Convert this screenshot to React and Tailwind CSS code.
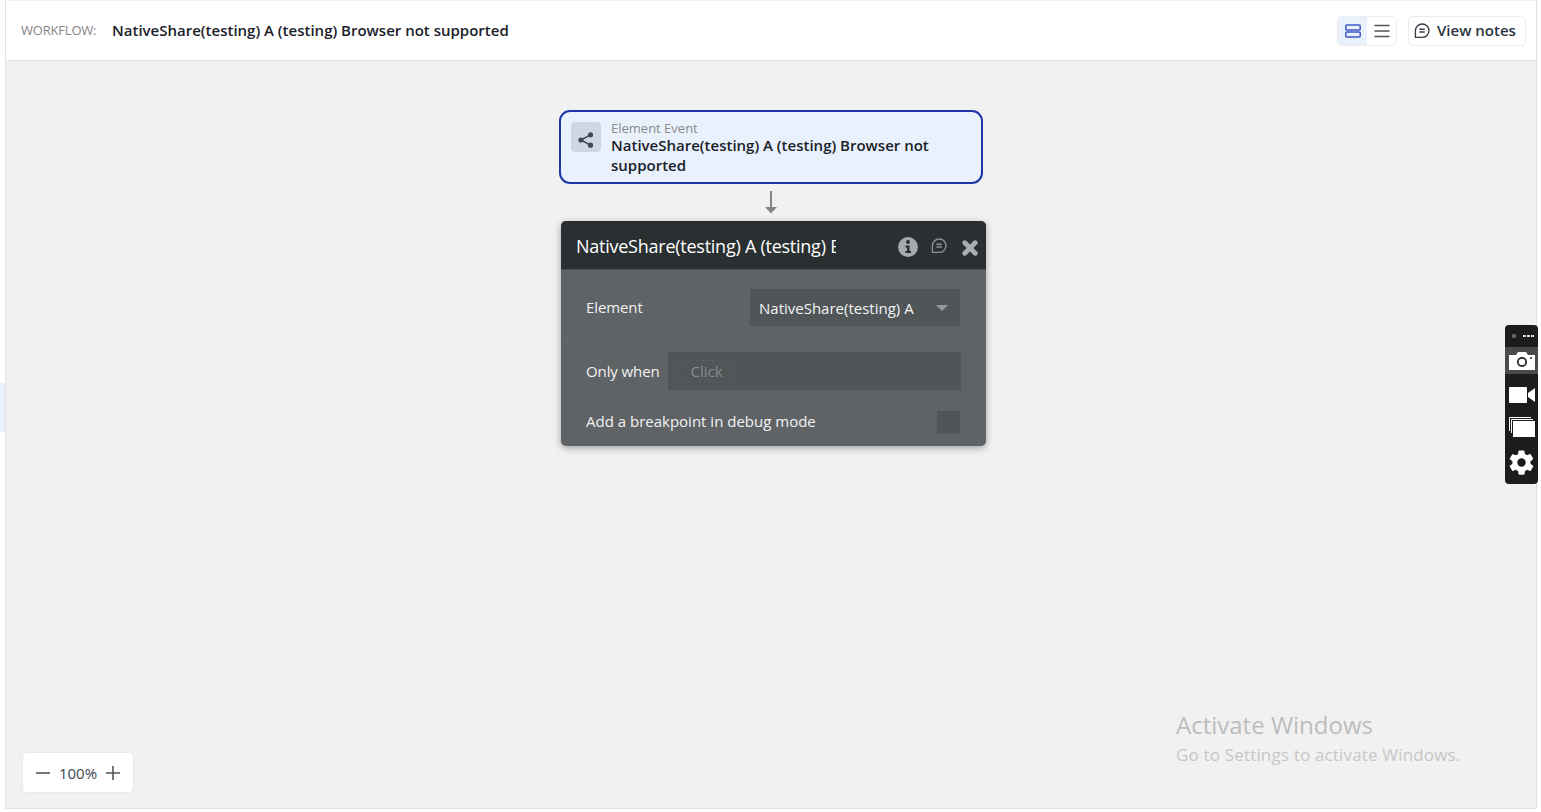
const openSans = { fontFamily: '"Open Sans", sans-serif' };

function ShareIcon() {
  return (
    <svg className="mt-[6px]" width="18" height="18" viewBox="0 0 18 18" fill="#3f4a54" stroke="#3f4a54">
      <line x1="4" y1="9" x2="13.5" y2="3.8" strokeWidth="1.5" />
      <line x1="4" y1="9" x2="13.5" y2="14.2" strokeWidth="1.5" />
      <circle cx="4" cy="9" r="2.6" strokeWidth="0" />
      <circle cx="13.5" cy="3.8" r="2.6" strokeWidth="0" />
      <circle cx="13.5" cy="14.2" r="2.6" strokeWidth="0" />
    </svg>
  );
}

function NoteIcon({ color, size = 16 }) {
  return (
    <svg width={size} height={size} viewBox="0 0 16 16" fill="none" stroke={color} strokeWidth="1.4">
      <path d="M8.3 1C12.2 1 15 3.9 15 7.6C15 11.4 12 14.4 8.2 14.4H1.4V7.8C1.4 3.9 4.4 1 8.3 1Z" strokeLinejoin="round" />
      <path d="M5.4 6.2H10.8M5.4 9H10.8" />
    </svg>
  );
}

export default function App() {
  return (
    <div className="relative w-[1541px] h-[812px] bg-white overflow-hidden" style={openSans}>
      <div className="absolute left-0 top-[383px] w-[5px] h-[49px] bg-[#e9f1fd]" />
      <div className="ml-[5px] w-[1532px] h-[809px] flex flex-col border-x border-b border-[#e2e2e2] border-t-0">
        <header className="h-[61px] flex items-center bg-white border-t border-b border-t-[#f2f2f2] border-b-[#e4e4e4] pl-[15px] pr-[10px] shrink-0">
          <span className="text-[13px] font-normal text-[#858585] w-[91px] tracking-[-0.2px]">WORKFLOW:</span>
          <span className="text-[15px] font-semibold text-[#1a2129]">NativeShare(testing) A (testing) Browser not supported</span>
          <div className="ml-auto flex items-center gap-[11px]">
            <div className="flex h-[30px] w-[60px] rounded-[5px] border border-[#ececec] overflow-hidden">
              <div className="w-[29px] bg-[#e9f1fd] flex items-center justify-center">
                <svg width="16" height="14" viewBox="0 0 16 14" fill="none" stroke="#3f57c4" strokeWidth="1.5">
                  <rect x="0.8" y="1" width="14.4" height="5" rx="1" />
                  <rect x="0.8" y="8" width="14.4" height="5" rx="1" />
                </svg>
              </div>
              <div className="flex-1 flex items-center justify-center">
                <svg width="16" height="14" viewBox="0 0 16 14" fill="none" stroke="#555" strokeWidth="1.5">
                  <path d="M0.5 1.5H15.5M0.5 7H15.5M0.5 12.5H15.5" />
                </svg>
              </div>
            </div>
            <button className="h-[30px] w-[118px] rounded-[5px] border border-[#ececec] flex items-center gap-[7px] pl-[5px] bg-white">
              <NoteIcon color="#3a3f45" />
              <span className="text-[15px] font-semibold text-[#2b3440]">View notes</span>
            </button>
          </div>
        </header>
        <main className="relative flex-1 bg-[#f1f1f1]">
          <div className="absolute left-[553px] top-[49px] w-[424px] h-[74px] rounded-[11px] border-2 border-[#1f36a8] bg-[#e9f1fd] flex">
            <div className="ml-[10px] mt-[10px] w-[30px] h-[30px] rounded-[4px] bg-[#cdd8e4] flex items-center justify-center shrink-0">
              <ShareIcon />
            </div>
            <div className="ml-[10px] mt-[9px] w-[350px]">
              <div className="text-[13px] leading-[15px] text-[#8b8b8b]">Element Event</div>
              <div className="text-[15px] leading-[20px] mt-[-1px] font-semibold text-[#1a2129]">NativeShare(testing) A (testing) Browser not supported</div>
            </div>
          </div>

          <svg className="absolute left-[758px] top-[130px]" width="14" height="24" viewBox="0 0 14 24" fill="#858585">
            <rect x="6" y="0" width="2" height="17" />
            <path d="M1 16H13L7 22.500Z" />
          </svg>

          <div className="absolute left-[555px] top-[160px] w-[425px] h-[225px] rounded-[5px] bg-[#5f6366] shadow-[0_2px_7px_rgba(0,0,0,0.35)] overflow-hidden">
            <div className="h-[49px] bg-[#2a2f31] border-b border-[#4a4f52] flex items-center pl-[15px] relative">
              <div className="w-[260px] mt-[2px] overflow-hidden whitespace-nowrap text-[18px] tracking-[-0.25px] text-white">NativeShare(testing) A (testing) Browser not supported</div>
              <svg className="absolute left-[337px] top-[16px]" width="20" height="20" viewBox="0 0 20 20">
                <circle cx="10" cy="10" r="10" fill="#a4aaad" />
                <circle cx="10" cy="5" r="2" fill="#2a2f31" />
                <path d="M7.5 8.500H11.500V14H13V16H7.500V14H9V10.500H7.500Z" fill="#2a2f31" />
              </svg>
              <div className="absolute left-[370px] top-[17px]">
                <NoteIcon color="#8a9093" />
              </div>
              <svg className="absolute left-[401px] top-[19px]" width="16" height="16" viewBox="0 0 16 16" stroke="#a9aeb1" strokeWidth="4.8" strokeLinecap="round">
                <path d="M2.800 2.800L13.200 13.200M13.200 2.800L2.800 13.200" />
              </svg>
            </div>
            <div className="h-[70px] border-b border-[#66696c] flex items-start pt-[19px] pl-[25px] pr-[26px] justify-between">
              <span className="text-[15px] leading-[37px] text-[#f2f2f2] tracking-[-0.1px]">Element</span>
              <div className="w-[210px] h-[37px] bg-[#505558] flex items-center pl-[9px] pr-[12px] justify-between">
                <span className="text-[15px] mt-[2px] text-[#f4f4f4]">NativeShare(testing) A</span>
                <svg width="12" height="6" viewBox="0 0 12 6" fill="#959a9d"><path d="M0 0H12L6 6Z" /></svg>
              </div>
            </div>
            <div className="flex items-center pt-[12px] pl-[25px] pr-[25px] gap-[8px]">
              <span className="text-[15px] tracking-[-0.1px] text-[#f2f2f2] w-[74px] whitespace-nowrap">Only when</span>
              <div className="flex-1 h-[38px] bg-[#505558] flex items-center pl-[10px]">
                <span className="h-[22px] w-[57px] rounded-[3px] border border-dashed border-[#585c5f] flex items-center justify-center text-[15px] text-[#8b8d8b]">Click</span>
              </div>
            </div>
            <div className="flex items-center mt-[21px] pl-[25px] pr-[26px] justify-between h-[23px]">
              <span className="text-[15px] mt-[-2px] text-[#f2f2f2]">Add a breakpoint in debug mode</span>
              <div className="w-[23px] h-[23px] bg-[#505558]" />
            </div>
          </div>

          <div className="absolute left-[16px] top-[691px] w-[112px] h-[41px] rounded-[5px] bg-white border border-[#eaeaea] flex items-center justify-between px-[13px]">
            <svg width="14" height="14" viewBox="0 0 14 14" stroke="#555" strokeWidth="1.600"><path d="M0 7H14" /></svg>
            <span className="text-[15px] text-[#3c4650] mt-[1px]">100%</span>
            <svg width="14" height="14" viewBox="0 0 14 14" stroke="#555" strokeWidth="1.600"><path d="M0 7H14M7 0V14" /></svg>
          </div>

          <div className="absolute left-[1170px] top-[648px]">
            <div className="text-[24px] leading-[32px] text-[#bdbdbd]">Activate Windows</div>
            <div className="text-[17px] leading-[28px] text-[#c7c7c7] tracking-[0.17px]">Go to Settings to activate Windows.</div>
          </div>
        </main>
      </div>

      <div className="absolute left-[1505px] top-[325px] w-[33px] h-[159px] rounded-[4px] bg-[#1c1c1c] flex flex-col items-center">
        <div className="h-[22px] w-full flex items-center justify-between pl-[7px] pr-[4px] shrink-0">
          <span className="w-[4px] h-[4px] rounded-full border border-[#9a9a9a]" />
          <span className="flex gap-[1px]">
            <span className="w-[3px] h-[2px] bg-[#dddddd]" />
            <span className="w-[3px] h-[2px] bg-[#dddddd]" />
            <span className="w-[3px] h-[2px] bg-[#dddddd]" />
          </span>
        </div>
        <div className="w-full h-[27px] bg-[#4a4a4a] flex items-center justify-center shrink-0">
          <svg width="26" height="18" viewBox="0 0 26 18">
            <path d="M0 3H7L9 0H17L19 3H26V18H0Z" fill="#fff" />
            <circle cx="13" cy="10" r="5" fill="#1c1c1c" />
            <circle cx="13" cy="10" r="3.300" fill="#fff" />
            <circle cx="22" cy="6" r="1" fill="#1c1c1c" />
          </svg>
        </div>
        <svg className="mt-[13px] shrink-0" width="26" height="16" viewBox="0 0 26 16" fill="#fff">
          <rect x="0" y="0" width="18" height="16" rx="1" />
          <path d="M19 6L26 1V15L19 10Z" />
        </svg>
        <svg className="mt-[14px] shrink-0" width="26" height="20" viewBox="0 0 26 20" fill="none">
          <path d="M0.500 14V0.500H22" stroke="#fff" />
          <path d="M2.500 16V2.500H24" stroke="#fff" />
          <rect x="4" y="4" width="22" height="16" fill="#fff" />
        </svg>
        <svg className="mt-[11px] shrink-0" width="29" height="29" viewBox="0 0 24 24">
          <path fill="#fff" d="M19.400 13c.04-.33.06-.66.06-1s-.02-.67-.06-1l2.100-1.650a.5.5 0 0 0 .12-.64l-2-3.460a.5.5 0 0 0-.61-.22l-2.490 1a7.300 7.300 0 0 0-1.730-1l-.38-2.650A.49.49 0 0 0 14 2h-4a.49.49 0 0 0-.49.42l-.38 2.650c-.63.25-1.200.6-1.730 1l-2.490-1a.5.5 0 0 0-.61.22l-2 3.460a.5.5 0 0 0 .12.64L4.530 11c-.04.33-.07.66-.07 1s.03.67.07 1l-2.110 1.650a.5.5 0 0 0-.12.64l2 3.460c.12.22.39.3.61.22l2.490-1c.52.4 1.100.74 1.730 1l.38 2.650c.04.24.25.42.49.42h4c.24 0 .45-.18.49-.42l.38-2.650c.63-.26 1.200-.6 1.730-1l2.490 1c.22.08.49 0 .61-.22l2-3.460a.5.5 0 0 0-.12-.64ZM12 15.500a3.500 3.500 0 1 1 0-7 3.500 3.500 0 0 1 0 7Z" />
        </svg>
      </div>
    </div>
  );
}
